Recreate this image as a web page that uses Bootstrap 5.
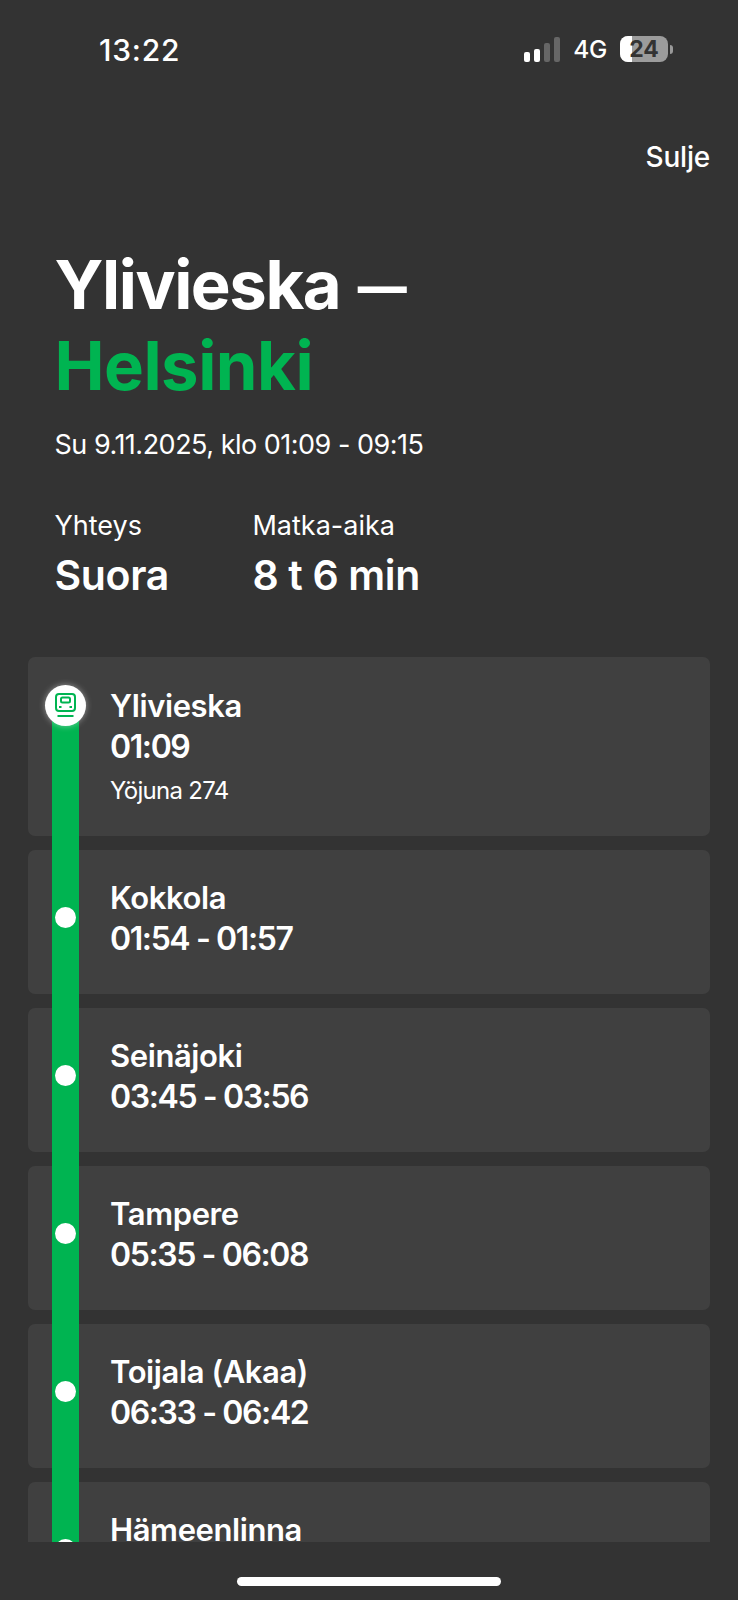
<!DOCTYPE html>
<html lang="fi">
<head>
<meta charset="utf-8">
<title>Yhteys</title>
<link href="https://cdn.jsdelivr.net/npm/bootstrap@5.3.0/dist/css/bootstrap.min.css" rel="stylesheet">
<style>
html,body{height:1600px;overflow:hidden;background:#333;}
body{font-family:Inter,"Liberation Sans",sans-serif;color:#fff;width:738px;}
.screen{height:1600px;}
.statusbar{height:100px;padding:33px 65px 0 99px;}
.clock{font-size:30px;font-weight:500;line-height:34px;letter-spacing:.8px;}
.stat-right{height:30px;margin-top:1px;}
.sig{gap:4px;height:25px;}
.sig i{display:block;width:6px;border-radius:2px;background:#fff;}
.sig i.off{background:#666;}
.net{font-size:24.5px;font-weight:500;line-height:26px;margin:0 13px 0 13px;letter-spacing:-.3px;}
.batt{width:48px;height:26px;border-radius:8px;background:#9c9c9c;overflow:hidden;color:#333;font-size:23px;font-weight:700;line-height:26px;text-align:center;}
.batt-fill{position:absolute;left:0;top:0;bottom:0;width:12px;background:#fff;}
.batt-num{position:relative;}
.batt-cap{width:3px;height:9px;background:#999;border-radius:0 3px 3px 0;margin-left:2px;}
.closebar{padding:40px 28px 0 0;height:100px;}
.close-txt{font-size:28px;line-height:34px;font-weight:500;letter-spacing:-.2px;color:#fff;text-decoration:none;}
.head{padding:44px 28px 0 54.5px;}
.ttl{font-size:67px;font-weight:700;line-height:81px;letter-spacing:-1.45px;margin:0;}
.ttl-dash{font-size:49px;font-weight:800;letter-spacing:0;margin-left:3px;position:relative;top:-5px;line-height:1;}
.ttl-green{color:#00b451;letter-spacing:-.5px;}
.datetxt{font-size:27px;line-height:34px;margin:22px 0 0;letter-spacing:-.5px;}
.metrics{margin-top:48px;gap:83.5px;}
.m-label{font-size:27px;line-height:32px;letter-spacing:0;}
.m-value{font-size:41px;font-weight:600;line-height:50px;letter-spacing:-.35px;margin-top:8px;}
.route{position:relative;margin:0 28px;height:885px;margin-top:57px;overflow:hidden;}
.rail{position:absolute;left:24px;width:27px;top:49px;bottom:0;background:#00b451;z-index:1;}
.stop{position:relative;background:#404040;border-radius:7px;height:143.5px;padding:27px 0 0 82px;margin-bottom:14.5px;}
.stop.first{height:179px;padding-top:28px;margin-bottom:14px;}
.st-name{font-size:31px;font-weight:600;line-height:41px;letter-spacing:-.4px;}
.st-time{font-size:32px;font-weight:600;line-height:41px;letter-spacing:-1.4px;}
.st-note{font-size:24px;line-height:30px;margin-top:9px;letter-spacing:-.7px;}
.dot{position:absolute;z-index:2;left:27px;top:57px;width:21px;height:21px;border-radius:50%;background:#fff;}
.hub{position:absolute;z-index:2;left:17px;top:28px;width:41px;height:41px;border-radius:50%;background:#fff;box-shadow:0 0 6px rgba(255,255,255,.45);}
.homebar{position:absolute;left:237px;top:1577px;width:264px;height:9px;border-radius:5px;background:#fff;}
</style>
</head>
<body>
<div class="screen position-relative">
  <div class="statusbar d-flex justify-content-between align-items-start">
    <div class="clock">13:22</div>
    <div class="stat-right d-flex align-items-center">
      <div class="sig d-flex align-items-end">
        <i style="height:10px"></i><i style="height:13px"></i><i class="off" style="height:19px"></i><i class="off" style="height:25px"></i>
      </div>
      <div class="net">4G</div>
      <div class="batt position-relative"><div class="batt-fill"></div><span class="batt-num">24</span></div>
      <div class="batt-cap"></div>
    </div>
  </div>
  <div class="closebar text-end"><a class="close-txt" href="#">Sulje</a></div>
  <div class="head">
    <h1 class="ttl">Ylivieska <span class="ttl-dash">—</span><br><span class="ttl-green">Helsinki</span></h1>
    <p class="datetxt">Su 9.11.2025, klo 01:09 - 09:15</p>
    <div class="metrics d-flex">
      <div><div class="m-label">Yhteys</div><div class="m-value">Suora</div></div>
      <div><div class="m-label">Matka-aika</div><div class="m-value">8 t 6 min</div></div>
    </div>
  </div>
  <div class="route">
    <div class="rail"></div>
    <div class="stop first">
      <div class="hub d-flex align-items-center justify-content-center">
        <svg width="25" height="27" viewBox="0 0 25 27" fill="none" stroke="#00b451" stroke-width="2"><rect x="3" y="2" width="19" height="17" rx="3"/><rect x="8" y="5.500" width="9" height="5" rx="1.500"/><path d="M6 15h2.500M16.500 15h2.500M4.500 24h16"/></svg>
      </div>
      <div class="st-name">Ylivieska</div>
      <div class="st-time">01:09</div>
      <div class="st-note">Yöjuna 274</div>
    </div>
    <div class="stop"><div class="dot"></div><div class="st-name">Kokkola</div><div class="st-time">01:54 - 01:57</div></div>
    <div class="stop"><div class="dot"></div><div class="st-name">Seinäjoki</div><div class="st-time">03:45 - 03:56</div></div>
    <div class="stop"><div class="dot"></div><div class="st-name">Tampere</div><div class="st-time">05:35 - 06:08</div></div>
    <div class="stop"><div class="dot"></div><div class="st-name">Toijala (Akaa)</div><div class="st-time">06:33 - 06:42</div></div>
    <div class="stop"><div class="dot"></div><div class="st-name">Hämeenlinna</div></div>
  </div>
  <div class="homebar"></div>
</div>
<script src="https://cdn.jsdelivr.net/npm/bootstrap@5.3.0/dist/js/bootstrap.bundle.min.js"></script>
</body>
</html>
